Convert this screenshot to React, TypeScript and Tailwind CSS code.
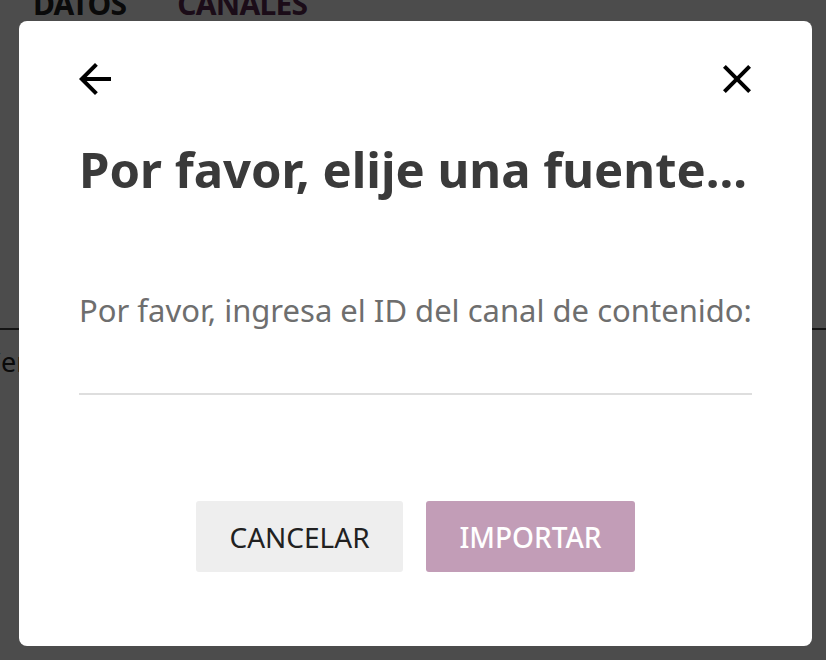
import React from "react";

const font = { fontFamily: '"Noto Sans", "Open Sans", sans-serif' };

export default function App() {
  return (
    <div className="relative w-[826px] h-[660px] overflow-hidden bg-white" style={font}>
      {/* Page behind the modal */}
      <div className="flex flex-col h-full">
        <div className="flex gap-[51px] px-[33px] -mt-[19px] h-[349px] border-b-2 border-[#444] items-start">
          <span className="text-[30px] font-bold text-[#222] tracking-tight">DATOS</span>
          <span className="text-[30px] font-bold text-[#5a2a50] tracking-tight">CANALES</span>
        </div>
        <div className="pt-[12px] text-[27px] text-[#222] -ml-[16px]">Cer</div>
      </div>

      {/* Overlay */}
      <div className="absolute inset-0 bg-black/70 flex items-start pl-[19px] pt-[21px]">
        <div className="w-[793px] h-[625px] bg-white rounded-[8px] px-[60px] pt-[34px] flex flex-col">
          <div className="flex items-center justify-between h-[48px] -ml-[8px] -mr-[9px]">
            <svg width="48" height="48" viewBox="0 0 24 24" fill="#000">
              <path d="M20 11H7.83l5.59-5.59L12 4l-8 8 8 8 1.41-1.41L7.83 13H20v-2z" />
            </svg>
            <svg width="48" height="48" viewBox="0 0 24 24" fill="#000">
              <path d="M19 6.41L17.59 5 12 10.59 6.41 5 5 6.41 10.59 12 5 17.59 6.41 19 12 13.41 17.59 19 19 17.59 13.41 12z" />
            </svg>
          </div>
          <h1 className="mt-[38px] text-[49px] leading-[56px] font-bold text-[#3a3a3a] whitespace-nowrap">
            Por favor, elije una fuente...
          </h1>
          <p className="mt-[93px] text-[31px] leading-[40px] text-[#6e6e6e] whitespace-nowrap">
            Por favor, ingresa el ID del canal de contenido:
          </p>
          <div className="mt-[63px] h-[2px] bg-[#dedede]" />
          <div className="mt-[106px] flex justify-center gap-[23px]">
            <button className="w-[207px] h-[71px] rounded-[3px] bg-[#eeeeee] text-[28px] text-[#212121]">
              CANCELAR
            </button>
            <button className="w-[209px] h-[71px] rounded-[3px] bg-[#c29db7] text-[28px] font-medium text-white">
              IMPORTAR
            </button>
          </div>
        </div>
      </div>
    </div>
  );
}
